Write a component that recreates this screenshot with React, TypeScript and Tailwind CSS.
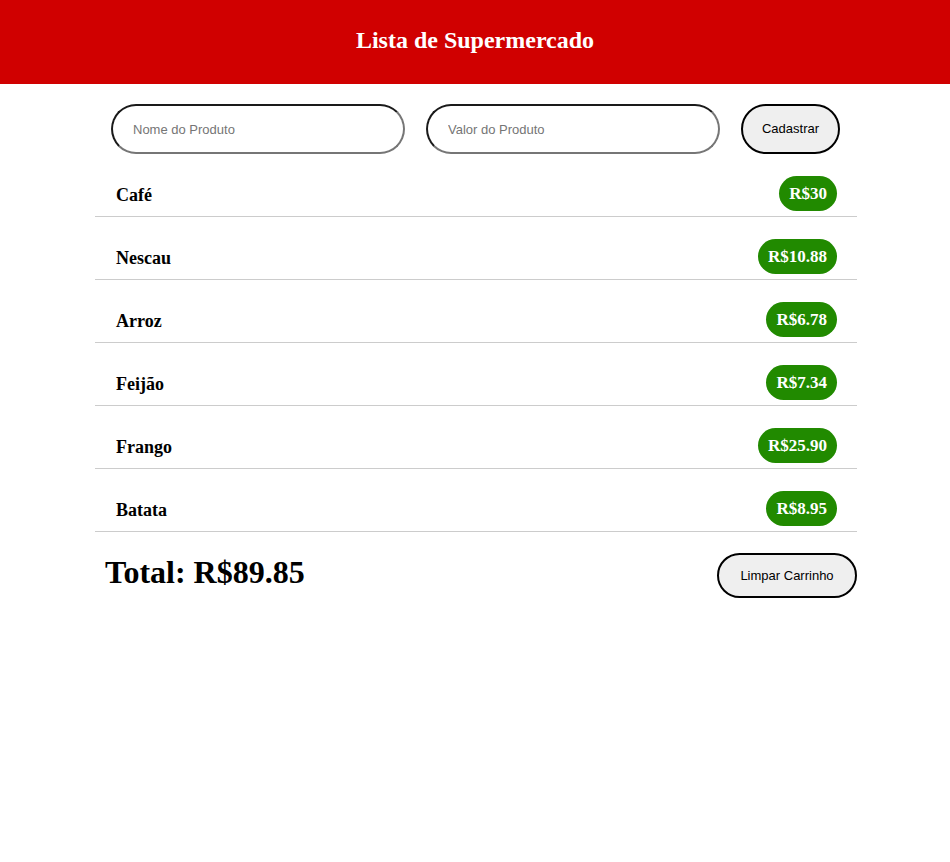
const produtos = [
  { nome: "Café", valor: "30" },
  { nome: "Nescau", valor: "10.88" },
  { nome: "Arroz", valor: "6.78" },
  { nome: "Feijão", valor: "7.34" },
  { nome: "Frango", valor: "25.90" },
  { nome: "Batata", valor: "8.95" },
];

export default function App() {
  return (
    <div className="min-h-screen bg-white font-['Liberation_Serif',serif]">
      <header className="h-[84px] bg-[#d00000] flex items-center justify-center pb-1">
        <h1 className="text-white text-[24px] font-bold">Lista de Supermercado</h1>
      </header>

      <main className="w-[762px] ml-[95px]">
        {/* formulario */}
        <div className="flex gap-[21px] px-4 pt-5">
          <input
            placeholder="Nome do Produto"
            className="w-[294px] h-[50px] rounded-full border-2 border-t-[#1a1a1a] border-l-[#1a1a1a] border-b-[#767676] border-r-[#767676] px-5 text-[13px] font-['Liberation_Sans',sans-serif] placeholder:text-[#757575] outline-none"
          />
          <input
            placeholder="Valor do Produto"
            className="w-[294px] h-[50px] rounded-full border-2 border-t-[#1a1a1a] border-l-[#1a1a1a] border-b-[#767676] border-r-[#767676] px-5 text-[13px] font-['Liberation_Sans',sans-serif] placeholder:text-[#757575] outline-none"
          />
          <button className="w-[99px] h-[50px] rounded-full border-2 border-black bg-[#efefef] text-[13px] font-['Liberation_Sans',sans-serif] text-black">
            Cadastrar
          </button>
        </div>

        {/* lista */}
        <ul>
          {produtos.map((p) => (
            <li
              key={p.nome}
              className="flex items-center justify-between pt-[22px] pb-[5px] pl-[21px] pr-5 border-b border-[#cccccc]"
            >
              <span className="text-[18px] font-bold text-black mt-[3px]">{p.nome}</span>
              <span className="h-[35px] px-[10px] rounded-full bg-[#218a00] text-white text-[17px] font-bold flex items-center">
                R${p.valor}
              </span>
            </li>
          ))}
        </ul>

        <div className="flex items-start justify-between pt-[21px] pl-[10px]">
          <h2 className="text-[32px] leading-[38px] font-bold text-black">Total: R$89.85</h2>
          <button className="w-[140px] h-[45px] rounded-full border-2 border-black bg-[#efefef] text-[13px] font-['Liberation_Sans',sans-serif] text-black">
            Limpar Carrinho
          </button>
        </div>
      </main>
    </div>
  );
}
